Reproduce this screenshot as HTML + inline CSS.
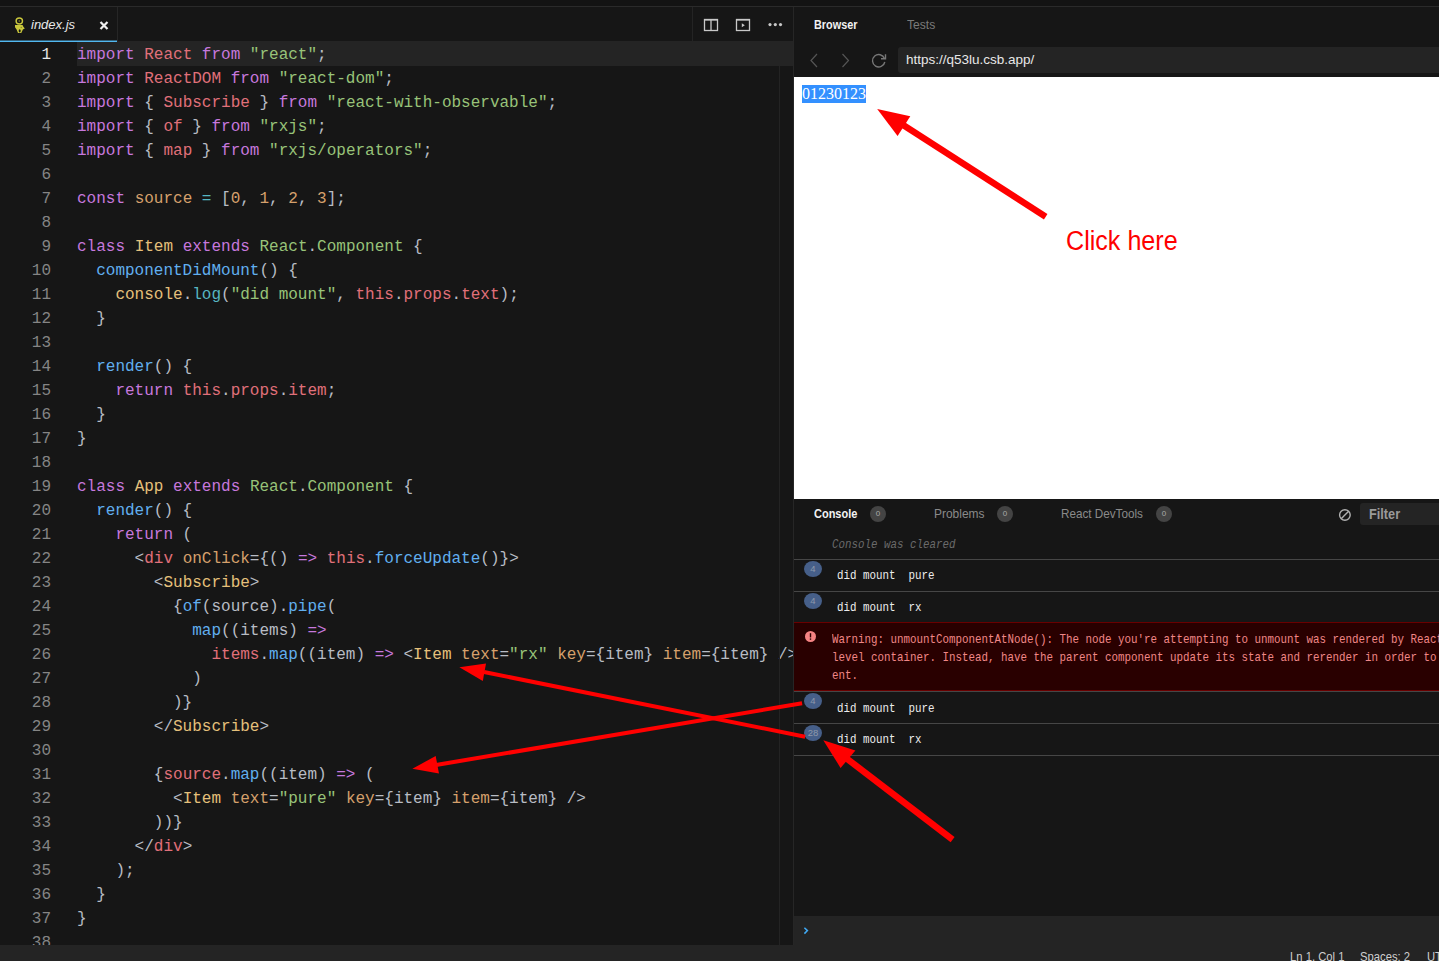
<!DOCTYPE html>
<html><head><meta charset="utf-8">
<style>
*{margin:0;padding:0;box-sizing:border-box}
html,body{width:1439px;height:961px;overflow:hidden;background:#161616;font-family:"Liberation Sans",sans-serif}
.abs{position:absolute}
#topband{left:0;top:0;width:1439px;height:6px;background:#131313}
#topline{left:0;top:6px;width:1439px;height:1px;background:#2a2a2a}
/* editor */
#tabbar{left:0;top:7px;width:793px;height:35px;background:#161616}
#tab{left:0;top:7px;width:118px;height:34px;border-right:1px solid #262626}
#tabline{left:0;top:41px;width:117px;height:1px;background:#52b8f0;box-shadow:0 -1px 0 rgba(82,184,240,0.45)}
#tabname{left:31px;top:17px;font-size:13px;font-style:italic;color:#e8e8e8;line-height:16px}
#tabx{left:99px;top:19.5px;width:10px;height:11px}
#tbsep{left:692px;top:7px;width:1px;height:34px;background:#242424}
#curline{left:77px;top:41px;width:716px;height:25px;background:#242424}
#vline{left:779px;top:66px;width:1px;height:879px;background:#232323}
.ln{position:absolute;left:77px;height:24px;line-height:24px;font-family:"Liberation Mono",monospace;font-size:16px;white-space:pre;color:#b8bcc4}
.num{position:absolute;left:0;width:51px;text-align:right;height:24px;line-height:24px;font-family:"Liberation Mono",monospace;font-size:16px;color:#858585}
.num.cur{color:#e6e6e6}
.k{color:#c678dd}.v{color:#e0707a}.s{color:#98c379}.n{color:#d5a06c}.o{color:#56b6c2}.y{color:#e5c07b}.f{color:#61afef}.g{color:#98c379}.c{color:#56b6c2}
#code{left:0;top:0;width:793px;height:945px;overflow:hidden}
#status{left:0;top:945px;width:1439px;height:16px;background:#242424}
.st{top:950px;font-size:12.5px;color:#d0d0d0;white-space:pre;line-height:14px;transform-origin:0 0;transform:scaleX(0.9)}
/* right pane */
#divider{left:793px;top:7px;width:1px;height:938px;background:#262626}
#rtabs{left:794px;top:7px;width:645px;height:34px;background:#161616}
.rtab{position:absolute;font-size:13px;line-height:16px;font-weight:bold;transform-origin:0 0}
#navbar{left:794px;top:41px;width:645px;height:36px;background:#161616}
#url{left:898px;top:47px;width:560px;height:26px;background:#242424;border-radius:3px}
#urltxt{left:906px;top:52px;font-size:13.5px;color:#e8e8e8;line-height:16px}
#preview{left:794px;top:77px;width:645px;height:422px;background:#fff}
#sel{left:802px;top:85px;height:18px;line-height:18px;background:#3390ff;color:#fff;font-family:"Liberation Serif",serif;font-size:16px;padding:0}
/* console */
#console{left:794px;top:499px;width:645px;height:417px;background:#161616}
.ctab{position:absolute;font-size:13px;line-height:16px;top:506px;color:#8a8a8a;transform-origin:0 0}
.badge0{position:absolute;top:506px;width:16px;height:16px;border-radius:50%;background:#444;color:#aaa;font-size:8px;line-height:16px;text-align:center}
#filter{left:1360px;top:503px;width:100px;height:22px;background:#242424;border-radius:3px}
#filtertxt{left:1369px;top:506px;font-size:14.5px;font-weight:bold;color:#9a9a9a;line-height:16px;transform-origin:0 0;transform:scaleX(0.877)}
.mono{position:absolute;font-family:"Liberation Mono",monospace;font-size:13px;white-space:pre;transform-origin:0 0;transform:scaleX(0.8333)}
.sep{position:absolute;left:794px;width:645px;height:1px;background:#464646}
.badge{position:absolute;left:804px;width:18px;height:16px;border-radius:50%;background:#465f89;color:#8d99ab;font-size:9.5px;line-height:15px;text-align:center;font-family:"Liberation Sans",sans-serif}
#warn{left:794px;top:622px;width:645px;height:69px;background:#290000;border-top:1px solid #6a0000;border-bottom:1px solid #6a0000}
#cinput{left:794px;top:916px;width:645px;height:29px;background:#242424}
</style></head>
<body>
<div id="code" class="abs">
<div id="curline" class="abs"></div>
<div class="num cur" style="top:43px">1</div>
<div class="num" style="top:67px">2</div>
<div class="num" style="top:91px">3</div>
<div class="num" style="top:115px">4</div>
<div class="num" style="top:139px">5</div>
<div class="num" style="top:163px">6</div>
<div class="num" style="top:187px">7</div>
<div class="num" style="top:211px">8</div>
<div class="num" style="top:235px">9</div>
<div class="num" style="top:259px">10</div>
<div class="num" style="top:283px">11</div>
<div class="num" style="top:307px">12</div>
<div class="num" style="top:331px">13</div>
<div class="num" style="top:355px">14</div>
<div class="num" style="top:379px">15</div>
<div class="num" style="top:403px">16</div>
<div class="num" style="top:427px">17</div>
<div class="num" style="top:451px">18</div>
<div class="num" style="top:475px">19</div>
<div class="num" style="top:499px">20</div>
<div class="num" style="top:523px">21</div>
<div class="num" style="top:547px">22</div>
<div class="num" style="top:571px">23</div>
<div class="num" style="top:595px">24</div>
<div class="num" style="top:619px">25</div>
<div class="num" style="top:643px">26</div>
<div class="num" style="top:667px">27</div>
<div class="num" style="top:691px">28</div>
<div class="num" style="top:715px">29</div>
<div class="num" style="top:739px">30</div>
<div class="num" style="top:763px">31</div>
<div class="num" style="top:787px">32</div>
<div class="num" style="top:811px">33</div>
<div class="num" style="top:835px">34</div>
<div class="num" style="top:859px">35</div>
<div class="num" style="top:883px">36</div>
<div class="num" style="top:907px">37</div>
<div class="num" style="top:931px">38</div>
<div class="ln" style="top:43px"><span class="k">import</span> <span class="v">React</span> <span class="k">from</span> <span class="s">&quot;react&quot;</span>;</div>
<div class="ln" style="top:67px"><span class="k">import</span> <span class="v">ReactDOM</span> <span class="k">from</span> <span class="s">&quot;react-dom&quot;</span>;</div>
<div class="ln" style="top:91px"><span class="k">import</span> { <span class="v">Subscribe</span> } <span class="k">from</span> <span class="s">&quot;react-with-observable&quot;</span>;</div>
<div class="ln" style="top:115px"><span class="k">import</span> { <span class="v">of</span> } <span class="k">from</span> <span class="s">&quot;rxjs&quot;</span>;</div>
<div class="ln" style="top:139px"><span class="k">import</span> { <span class="v">map</span> } <span class="k">from</span> <span class="s">&quot;rxjs/operators&quot;</span>;</div>
<div class="ln" style="top:163px"></div>
<div class="ln" style="top:187px"><span class="k">const</span> <span class="n">source</span> <span class="o">=</span> [<span class="n">0</span>, <span class="n">1</span>, <span class="n">2</span>, <span class="n">3</span>];</div>
<div class="ln" style="top:211px"></div>
<div class="ln" style="top:235px"><span class="k">class</span> <span class="y">Item</span> <span class="k">extends</span> <span class="g">React</span>.<span class="g">Component</span> {</div>
<div class="ln" style="top:259px">  <span class="f">componentDidMount</span>() {</div>
<div class="ln" style="top:283px">    <span class="y">console</span>.<span class="c">log</span>(<span class="s">&quot;did mount&quot;</span>, <span class="v">this</span>.<span class="v">props</span>.<span class="v">text</span>);</div>
<div class="ln" style="top:307px">  }</div>
<div class="ln" style="top:331px"></div>
<div class="ln" style="top:355px">  <span class="f">render</span>() {</div>
<div class="ln" style="top:379px">    <span class="k">return</span> <span class="v">this</span>.<span class="v">props</span>.<span class="v">item</span>;</div>
<div class="ln" style="top:403px">  }</div>
<div class="ln" style="top:427px">}</div>
<div class="ln" style="top:451px"></div>
<div class="ln" style="top:475px"><span class="k">class</span> <span class="y">App</span> <span class="k">extends</span> <span class="g">React</span>.<span class="g">Component</span> {</div>
<div class="ln" style="top:499px">  <span class="f">render</span>() {</div>
<div class="ln" style="top:523px">    <span class="k">return</span> (</div>
<div class="ln" style="top:547px">      &lt;<span class="v">div</span> <span class="n">onClick</span>={() <span class="k">=&gt;</span> <span class="v">this</span>.<span class="f">forceUpdate</span>()}&gt;</div>
<div class="ln" style="top:571px">        &lt;<span class="y">Subscribe</span>&gt;</div>
<div class="ln" style="top:595px">          {<span class="f">of</span>(source).<span class="f">pipe</span>(</div>
<div class="ln" style="top:619px">            <span class="f">map</span>((items) <span class="k">=&gt;</span></div>
<div class="ln" style="top:643px">              <span class="v">items</span>.<span class="f">map</span>((item) <span class="k">=&gt;</span> &lt;<span class="y">Item</span> <span class="n">text</span>=<span class="s">&quot;rx&quot;</span> <span class="n">key</span>={item} <span class="n">item</span>={item} /&gt;</div>
<div class="ln" style="top:667px">            )</div>
<div class="ln" style="top:691px">          )}</div>
<div class="ln" style="top:715px">        &lt;/<span class="y">Subscribe</span>&gt;</div>
<div class="ln" style="top:739px"></div>
<div class="ln" style="top:763px">        {<span class="v">source</span>.<span class="f">map</span>((item) <span class="k">=&gt;</span> (</div>
<div class="ln" style="top:787px">          &lt;<span class="y">Item</span> <span class="n">text</span>=<span class="s">&quot;pure&quot;</span> <span class="n">key</span>={item} <span class="n">item</span>={item} /&gt;</div>
<div class="ln" style="top:811px">        ))}</div>
<div class="ln" style="top:835px">      &lt;/<span class="v">div</span>&gt;</div>
<div class="ln" style="top:859px">    );</div>
<div class="ln" style="top:883px">  }</div>
<div class="ln" style="top:907px">}</div>
<div class="ln" style="top:931px"></div>
</div>
<div id="vline" class="abs"></div>
<div id="topband" class="abs"></div>
<div id="topline" class="abs"></div>
<div id="tab" class="abs"></div>
<div id="tabline" class="abs"></div>
<svg class="abs" style="left:14px;top:17px" width="12" height="17" viewBox="0 0 12 17"><ellipse cx="5.3" cy="4" rx="3.2" ry="3" fill="none" stroke="#c9c73c" stroke-width="1.4"/><circle cx="5.3" cy="4" r="0.8" fill="#8a8a30"/><path d="M1 8 L8.6 8 L9.2 9.6 L10.8 11.4 L8.9 12.6 L7.3 16 L4 16 L2.6 12.4 L1 10.2z" fill="#c9c73c"/><ellipse cx="5.7" cy="13.8" rx="1" ry="1.6" fill="#161616"/><circle cx="7.3" cy="10.5" r="0.8" fill="#8a8a30"/></svg>
<div id="tabname" class="abs">index.js</div>
<svg id="tabx" class="abs" viewBox="0 0 10 11"><path d="M1.5 2 L8.5 9 M8.5 2 L1.5 9" stroke="#f0f0f0" stroke-width="2.2"/></svg>
<div id="tbsep" class="abs"></div>
<svg class="abs" style="left:703px;top:18px" width="16" height="14" viewBox="0 0 16 14"><rect x="1.5" y="1.5" width="13" height="11" fill="none" stroke="#c8c8c8" stroke-width="1.3"/><rect x="1" y="1" width="14" height="1.6" fill="#c8c8c8"/><line x1="8" y1="1.5" x2="8" y2="12.5" stroke="#c8c8c8" stroke-width="1.3"/></svg>
<svg class="abs" style="left:735px;top:18px" width="16" height="14" viewBox="0 0 16 14"><rect x="1.5" y="1.5" width="13" height="11" fill="none" stroke="#c8c8c8" stroke-width="1.3"/><rect x="1" y="1" width="14" height="1.6" fill="#c8c8c8"/><path d="M6.8 5.3 L9.8 7.3 L6.8 9.3z" fill="#c8c8c8"/></svg>
<svg class="abs" style="left:768px;top:22px" width="16" height="6" viewBox="0 0 16 6"><circle cx="2" cy="2.6" r="1.6" fill="#c8c8c8"/><circle cx="7.3" cy="2.6" r="1.6" fill="#c8c8c8"/><circle cx="12.5" cy="2.6" r="1.6" fill="#c8c8c8"/></svg>

<div id="divider" class="abs"></div>
<div class="rtab abs" style="left:814px;top:17px;color:#f2f2f2;transform:scaleX(0.835)">Browser</div>
<div class="rtab abs" style="left:907px;top:17px;color:#7a7a7a;font-weight:normal;transform:scaleX(0.93)">Tests</div>
<svg class="abs" style="left:808px;top:53px" width="12" height="15" viewBox="0 0 12 15"><path d="M9 1 L3 7.5 L9 14" fill="none" stroke="#555" stroke-width="1.2"/></svg>
<svg class="abs" style="left:840px;top:53px" width="12" height="15" viewBox="0 0 12 15"><path d="M2.5 1 L8.5 7.5 L2.5 14" fill="none" stroke="#555" stroke-width="1.2"/></svg>
<svg class="abs" style="left:870px;top:52px" width="18" height="17" viewBox="0 0 18 17"><path d="M14.5 6.5 A6.2 6.2 0 1 0 14.8 10" fill="none" stroke="#777" stroke-width="1.4"/><path d="M11 6.8 L15.5 6.8 L15.5 2.3" fill="none" stroke="#777" stroke-width="1.4"/></svg>
<div id="url" class="abs"></div>
<div id="urltxt" class="abs">https://q53lu.csb.app/</div>
<div id="preview" class="abs"></div>
<div id="sel" class="abs">01230123</div>

<div id="console" class="abs"></div>
<div class="ctab" style="left:814px;color:#f2f2f2;font-weight:bold;transform:scaleX(0.845)">Console</div>
<div class="badge0" style="left:870px">0</div>
<div class="ctab" style="left:934px;transform:scaleX(0.92)">Problems</div>
<div class="badge0" style="left:997px">0</div>
<div class="ctab" style="left:1061px;transform:scaleX(0.90)">React DevTools</div>
<div class="badge0" style="left:1156px">0</div>
<svg class="abs" style="left:1338px;top:508px" width="14" height="14" viewBox="0 0 14 14"><circle cx="6.9" cy="7" r="5.3" fill="none" stroke="#b0b0b0" stroke-width="1.4"/><line x1="3.2" y1="10.8" x2="10.6" y2="3.2" stroke="#b0b0b0" stroke-width="1.4"/></svg>
<div id="filter" class="abs"></div>
<div id="filtertxt" class="abs">Filter</div>

<div class="mono" style="left:832px;top:536.5px;color:#6a6a6a;font-style:italic;line-height:16px">Console was cleared</div>
<div class="sep" style="top:559px"></div>
<div class="badge" style="top:561px">4</div>
<div class="mono" style="left:837px;top:568px;color:#ececec;line-height:16px">did mount  pure</div>
<div class="sep" style="top:591px"></div>
<div class="badge" style="top:593px">4</div>
<div class="mono" style="left:837px;top:600px;color:#ececec;line-height:16px">did mount  rx</div>
<div id="warn" class="abs"></div>
<svg class="abs" style="left:805px;top:631px" width="11" height="11" viewBox="0 0 11 11"><circle cx="5.5" cy="5.5" r="5.5" fill="#f58383"/><rect x="4.8" y="2.2" width="1.4" height="4.2" fill="#290000"/><rect x="4.8" y="7.4" width="1.4" height="1.4" fill="#290000"/></svg>
<div class="mono" style="left:832px;top:631px;color:#f08787;line-height:18px">Warning: unmountComponentAtNode(): The node you're attempting to unmount was rendered by React and is not a top-
level container. Instead, have the parent component update its state and rerender in order to remove this compon
ent.</div>
<div class="sep" style="top:691px"></div>
<div class="badge" style="top:693px">4</div>
<div class="mono" style="left:837px;top:701px;color:#ececec;line-height:16px">did mount  pure</div>
<div class="sep" style="top:723px"></div>
<div class="badge" style="top:725px">28</div>
<div class="mono" style="left:837px;top:732px;color:#ececec;line-height:16px">did mount  rx</div>
<div class="sep" style="top:755px"></div>
<div id="cinput" class="abs"></div>
<svg class="abs" style="left:802px;top:926px" width="8" height="10" viewBox="0 0 8 10"><path d="M2.4 1.8 L5.4 4.6 L2.4 7.6" fill="none" stroke="#40a9f3" stroke-width="1.5"/></svg>
<div id="status" class="abs"></div>
<div class="abs st" style="left:1290px">Ln 1, Col 1</div><div class="abs st" style="left:1360px">Spaces: 2</div><div class="abs st" style="left:1427px">UTF-8</div>

<svg class="abs" style="left:0;top:0" width="1439" height="961" viewBox="0 0 1439 961">
<g fill="#ff0000" stroke="none">
<line x1="1045.7" y1="216.7" x2="900" y2="123" stroke="#ff0000" stroke-width="6.5"/>
<polygon points="877.2,108.9 910.3,116.2 897.6,135.9"/>
<line x1="952.6" y1="839.7" x2="846" y2="758" stroke="#ff0000" stroke-width="6.5"/>
<polygon points="823.3,740.3 855.4,750.4 840.6,768"/>
<line x1="802.1" y1="703.3" x2="436" y2="765" stroke="#ff0000" stroke-width="4"/>
<polygon points="412.4,768.7 435.7,756 439,773.5"/>
<line x1="805.1" y1="736.7" x2="484" y2="672" stroke="#ff0000" stroke-width="4"/>
<polygon points="459.4,667.2 486,663.4 482.8,680.9"/>
</g>
</svg>
<div class="abs" style="left:1066px;top:226px;font-size:27px;color:#ff0000;line-height:30px;transform-origin:0 0;transform:scaleX(0.93)">Click here</div>
</body></html>
